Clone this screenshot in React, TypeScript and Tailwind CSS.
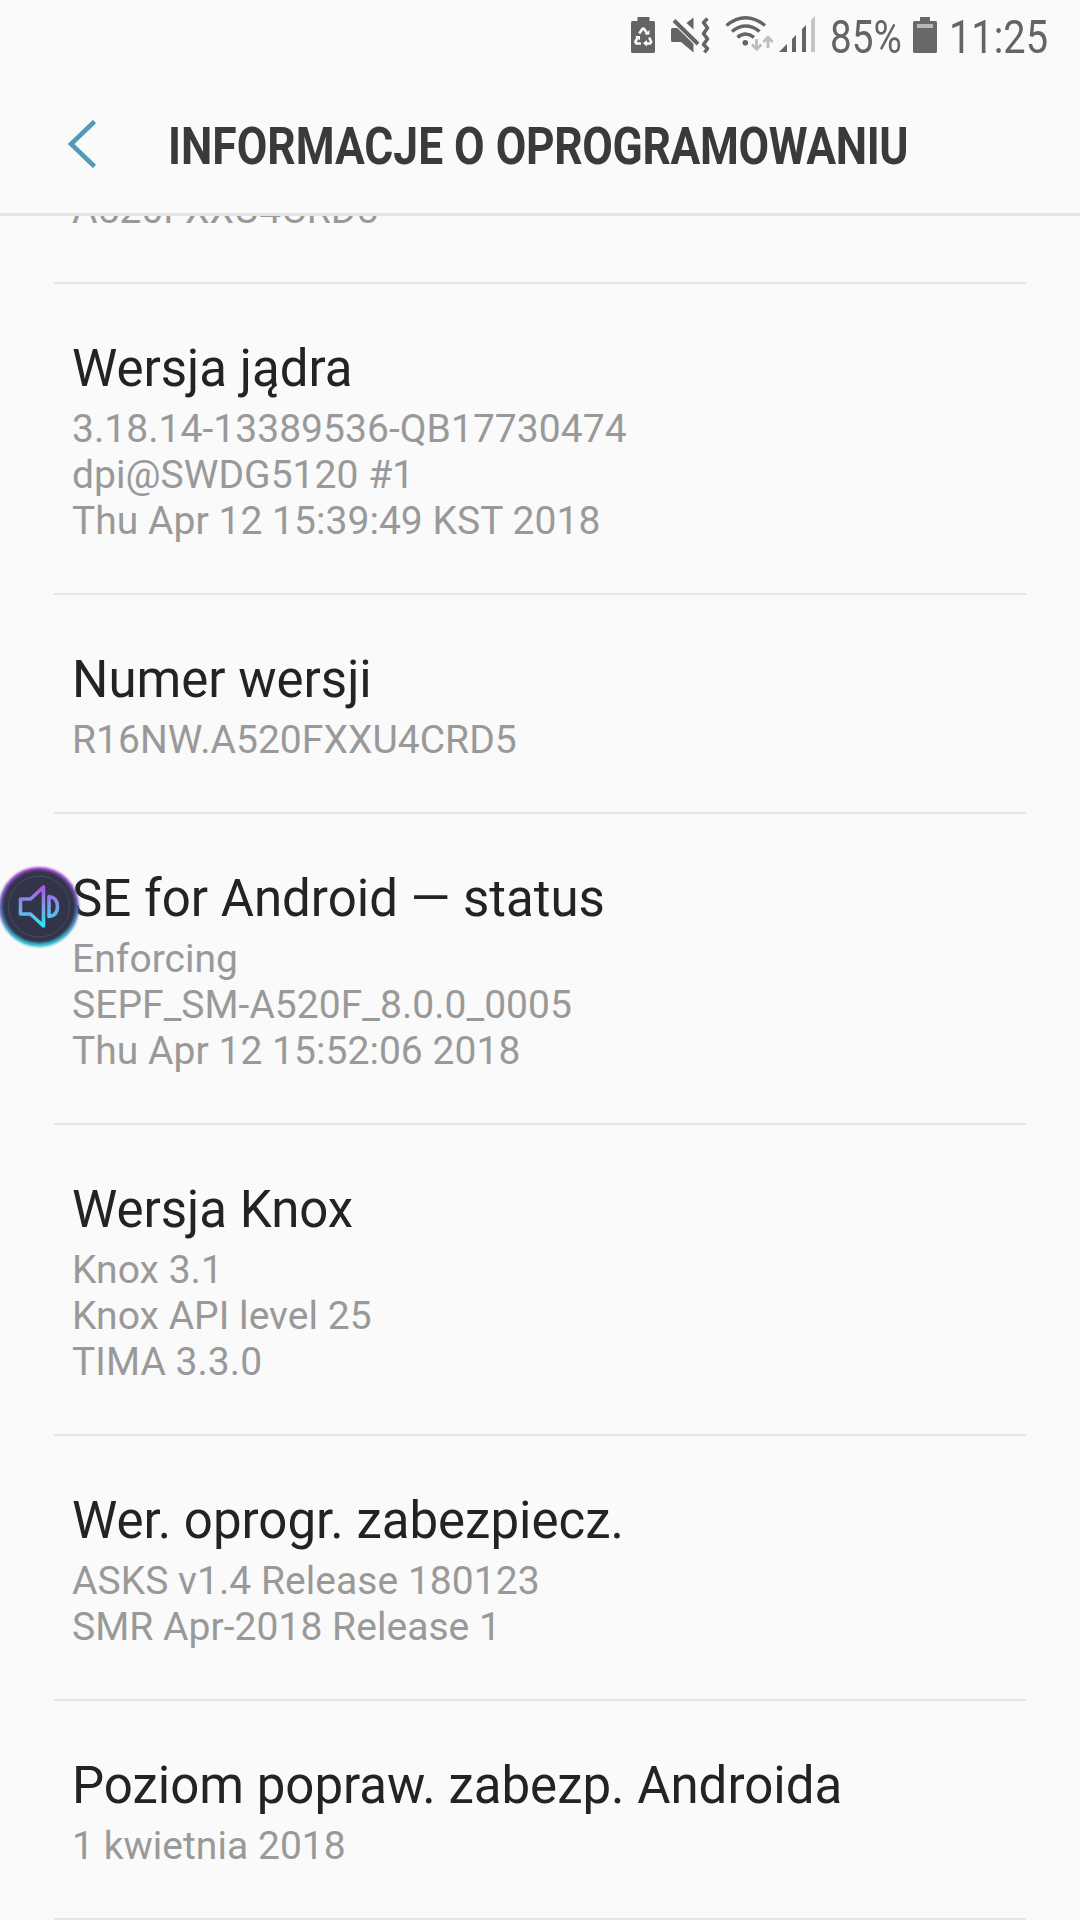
import React from "react";

const sections = [
  {
    title: "Wersja jądra",
    lines: [
      "3.18.14-13389536-QB17730474",
      "dpi@SWDG5120 #1",
      "Thu Apr 12 15:39:49 KST 2018",
    ],
  },
  { title: "Numer wersji", lines: ["R16NW.A520FXXU4CRD5"] },
  {
    title: "SE for Android — status",
    lines: [
      "Enforcing",
      "SEPF_SM-A520F_8.0.0_0005",
      "Thu Apr 12 15:52:06 2018",
    ],
  },
  {
    title: "Wersja Knox",
    lines: ["Knox 3.1", "Knox API level 25", "TIMA 3.3.0"],
  },
  {
    title: "Wer. oprogr. zabezpiecz.",
    lines: ["ASKS v1.4 Release 180123", "SMR Apr-2018 Release 1"],
  },
  { title: "Poziom popraw. zabezp. Androida", lines: ["1 kwietnia 2018"] },
];

const StatusIcons = () => (
  <svg width="196" height="74" viewBox="620 0 196 74" fill="#646464">
    {/* battery saver */}
    <path d="M637.5 17h12v4h4q1.500 0 1.500 1.500v29q0 1.500-1.500 1.500h-21q-1.500 0-1.500-1.500v-29q0-1.500 1.500-1.500h5z" />
    <g fill="none" stroke="#fafafa" strokeWidth="2.600">
      <path d="M639.300 33.500l3.200-4.700h1.500l3.600 5.200" />
      <path d="M649.200 37.500l2 4.300-1.200 1.700h-4.500" />
      <path d="M641 43.500h-4.500l-1.200-1.700 2.700-5" />
    </g>
    <path fill="#fafafa" d="M644.500 34.500h5v-4.500zM647 40v6.500l-4-3.300zM635 36h5v4.500z" />
    {/* muted, vibrating */}
    <path d="M693.500 17.500v12l-7-6.500zM671 29.500q0-1.500 1.500-1.500h6.500l14.500 13v11.500L681 42h-8.500q-1.500 0-1.500-1.500z" />
    <path d="M674 20.500l24 23.500" stroke="#fafafa" strokeWidth="6" />
    <path d="M674 20.500l24 23.500" stroke="#646464" strokeWidth="4" />
    <path
      d="M707.500 18.500l-4 4 4 5.500-4 5.500 4 5.500-4 5.500 4 4-3 4"
      fill="none"
      stroke="#646464"
      strokeWidth="3.600"
      strokeLinejoin="round"
    />
    {/* wifi */}
    <g fill="none" stroke="#646464" strokeWidth="3.500">
      <path d="M726.500 25.500q19-15.500 38.500 0" />
      <path d="M732 31.500q13.700-11 27.500 0" />
      <path d="M737.500 37.300q8-6.500 16.500 0" />
    </g>
    <circle cx="745.300" cy="42.700" r="2.800" />
    <g fill="none" stroke="#bdbdbd" strokeWidth="2.800">
      <path d="M756.500 39v10M752 44.500l4.700 4.700 4.700-4.700" />
      <path d="M768 48V38M763.300 42l4.700-4.700 4.700 4.700" />
    </g>
    {/* signal */}
    <path d="M779 52l8-8v8zM792 39l4-4v17h-4zM802 29l4-4v27h-4z" />
    <path fill="#c4c4c4" d="M811 20l4-4v36h-4z" />
  </svg>
);

const BatteryIcon = () => (
  <svg width="24" height="36" viewBox="0 0 24 36" fill="#686868">
    <path d="M7 0h10v4h5.500q1.500 0 1.500 1.500v29q0 1.500-1.500 1.500h-21Q0 36 0 34.500v-29Q0 4 1.500 4H7z" />
    <path fill="#b9b9b9" d="M4 7h16v4H4z" />
  </svg>
);

const SoundBubble = () => (
  <svg
    className="absolute -left-2 top-[859px]"
    width="96"
    height="96"
    viewBox="-8 859 96 96"
  >
    <defs>
      <linearGradient id="ring" x1="0" y1="0" x2="0" y2="1">
        <stop offset="0" stopColor="#a03cc8" />
        <stop offset="0.500" stopColor="#5a62b4" />
        <stop offset="1" stopColor="#2cc4cf" />
      </linearGradient>
      <linearGradient
        id="horn"
        gradientUnits="userSpaceOnUse"
        x1="0"
        y1="886"
        x2="0"
        y2="927"
      >
        <stop offset="0" stopColor="#b050ea" />
        <stop offset="0.500" stopColor="#7d9cea" />
        <stop offset="1" stopColor="#1ff0f2" />
      </linearGradient>
      <filter id="soft" x="-20%" y="-20%" width="140%" height="140%">
        <feGaussianBlur stdDeviation="1.300" />
      </filter>
    </defs>
    <circle cx="39" cy="907" r="40" fill="url(#ring)" filter="url(#soft)" />
    <circle cx="39" cy="906.500" r="36.500" fill="#33344a" filter="url(#soft)" />
    <circle cx="39" cy="906.500" r="30.500" fill="none" stroke="#4a4b63" />
    <g fill="none" stroke="url(#horn)" strokeWidth="3.600" strokeLinejoin="round">
      <path d="M20.500 899h10l13-12v39l-13-12h-10z" />
      <path d="M49 896.500q8.500 1 8.500 10t-8.500 10z" />
    </g>
  </svg>
);

const App = () => {
  return (
    <div className="relative flex h-[1920px] w-[1080px] flex-col overflow-hidden bg-[#fafafa] font-[Roboto,sans-serif]">
      <div className="flex h-[74px] shrink-0 items-center justify-end pr-8 text-[#646464]">
        <StatusIcons />
        <span className="ml-3.5 w-[71px] whitespace-nowrap text-[46px] leading-[72px]">
          <span className="inline-block origin-left scale-x-[0.84]">85%</span>
        </span>
        <div className="mb-[4px] ml-3">
          <BatteryIcon />
        </div>
        <span className="ml-3 w-[99px] whitespace-nowrap text-[46px] leading-[72px]">
          <span className="inline-block origin-left scale-x-[0.865]">11:25</span>
        </span>
      </div>

      <header className="flex h-[142px] shrink-0 items-center border-b-3 border-[#e5e5e5] pl-[68px]">
        <svg width="29" height="48" viewBox="0 0 29 48" fill="none">
          <path d="M26.500 1.500L3 24l23.500 22.500" stroke="#519ab8" strokeWidth="4.600" />
        </svg>
        <h1 className="mt-1.5 ml-[71px] origin-left scale-x-[0.87] whitespace-nowrap text-[51px] font-bold leading-[60px] text-[#3a3a3a]">
          INFORMACJE O <span className="tracking-[-0.4px]">OPROGRAMOWANIU</span>
        </h1>
      </header>

      <main className="flex min-h-0 flex-1 flex-col justify-end overflow-hidden px-[54px] text-[39px] leading-[46px] tracking-[0.04px] text-[#999999]">
        <div className="shrink-0 border-b-2 border-[#e5e5e5] px-[18px] pb-[49px]">
          A520FXXU4CRD5
        </div>
        {sections.map((section, index) => (
          <div
            key={index}
            className="shrink-0 border-b-2 border-[#e5e5e5] px-[18px] pt-[55px] pb-[49px]"
          >
            <h2 className="mb-[7px] text-[51px] leading-[60px] tracking-normal text-[#232323]">
              {section.title}
            </h2>
            {section.lines.map((line) => (
              <p key={line}>{line}</p>
            ))}
          </div>
        ))}
      </main>

      <SoundBubble />
    </div>
  );
};

export default App;
